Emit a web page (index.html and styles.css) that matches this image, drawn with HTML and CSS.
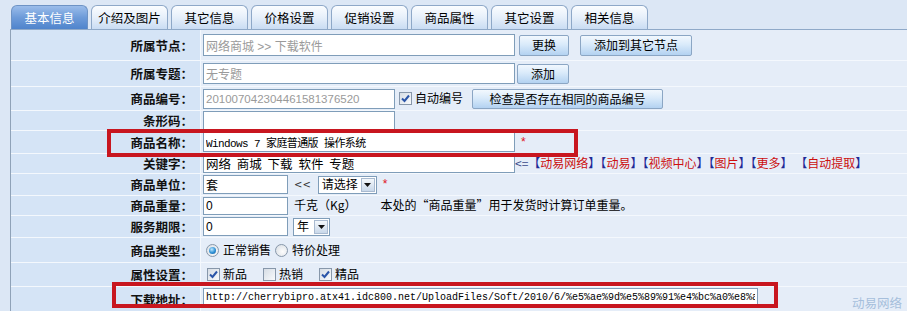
FILE: index.html
```html
<!DOCTYPE html>
<html lang="zh-CN">
<head>
    <meta charset="UTF-8">
    <meta name="viewport" content="width=device-width, initial-scale=1.0">
    <title>添加商品</title>
    <link rel="stylesheet" href="styles.css">
</head>
<body>
<div class="page">
    <ul class="tabs">
        <li class="tab on">基本信息</li>
        <li class="tab">介绍及图片</li>
        <li class="tab">其它信息</li>
        <li class="tab">价格设置</li>
        <li class="tab">促销设置</li>
        <li class="tab">商品属性</li>
        <li class="tab">其它设置</li>
        <li class="tab">相关信息</li>
    </ul>

    <div class="panel">
        <div class="row h31">
            <div class="label">所属节点：</div>
            <div class="field">
                <input class="text w312 h22 dim" type="text" value="网络商城 >> 下载软件">
                <button class="btn change">更换</button>
                <button class="btn addnode">添加到其它节点</button>
            </div>
        </div>
        <div class="row h26">
            <div class="label">所属专题：</div>
            <div class="field">
                <input class="text w312 h21 dim" type="text" value="无专题">
                <button class="btn add">添加</button>
            </div>
        </div>
        <div class="row h24">
            <div class="label">商品编号：</div>
            <div class="field">
                <input class="text w192 h20 dim num" type="text" value="201007042304461581376520">
                <span class="chk on"><svg width="11" height="11" viewBox="0 0 11 11"><path d="M2 5.5 L4.5 8 L9 2.5" /></svg></span>
                <span class="opt">自动编号</span>
                <button class="btn check">检查是否存在相同的商品编号</button>
            </div>
        </div>
        <div class="row h20">
            <div class="label">条形码：</div>
            <div class="field">
                <input class="text w192 h19" type="text" value="">
            </div>
        </div>
        <div class="row h23">
            <div class="label">商品名称：</div>
            <div class="field">
                <input class="text w312 h20 mono" type="text" value="Windows 7 家庭普通版 操作系统">
                <span class="req">*</span>
            </div>
        </div>
        <div class="row h20">
            <div class="label">关键字：</div>
            <div class="field">
                <input class="text w312 h19 words" type="text" value="网络 商城 下载 软件 专题">
                <span class="links">&lt;=<b>【</b><a>动易网络</a><b>】【</b><a>动易</a><b>】【</b><a>视频中心</a><b>】【</b><a>图片</a><b>】【</b><a>更多</a><b>】</b> <b>【</b><a>自动提取</a><b>】</b></span>
            </div>
        </div>
        <div class="row h22">
            <div class="label">商品单位：</div>
            <div class="field">
                <input class="text w85 h19" type="text" value="套">
                <span class="back">&lt;&lt;</span>
                <span class="select w59"><span class="sel-text">请选择</span><span class="sel-arrow"><svg width="7" height="4" viewBox="0 0 7 4"><path d="M0 0h7L3.5 4z"/></svg></span></span>
                <span class="req">*</span>
            </div>
        </div>
        <div class="row h20">
            <div class="label">商品重量：</div>
            <div class="field">
                <input class="text w85 h18" type="text" value="0">
                <span class="unit">千克（Kg）</span>
                <span class="note">本处的“商品重量”用于发货时计算订单重量。</span>
            </div>
        </div>
        <div class="row h22">
            <div class="label">服务期限：</div>
            <div class="field">
                <input class="text w85 h19" type="text" value="0">
                <span class="select w37 year"><span class="sel-text">年</span><span class="sel-arrow"><svg width="7" height="4" viewBox="0 0 7 4"><path d="M0 0h7L3.5 4z"/></svg></span></span>
            </div>
        </div>
        <div class="row h25">
            <div class="label">商品类型：</div>
            <div class="field">
                <span class="radio on"></span><span class="opt">正常销售</span>
                <span class="radio"></span><span class="opt">特价处理</span>
            </div>
        </div>
        <div class="row h24">
            <div class="label">属性设置：</div>
            <div class="field">
                <span class="chk on"><svg width="11" height="11" viewBox="0 0 11 11"><path d="M2 5.5 L4.5 8 L9 2.5" /></svg></span><span class="opt">新品</span>
                <span class="chk"></span><span class="opt">热销</span>
                <span class="chk on"><svg width="11" height="11" viewBox="0 0 11 11"><path d="M2 5.5 L4.5 8 L9 2.5" /></svg></span><span class="opt">精品</span>
            </div>
        </div>
        <div class="row h25 top">
            <div class="label">下载地址：</div>
            <div class="field">
                <input class="text w555 h18 url" type="text" value="http://cherrybipro.atx41.idc800.net/UploadFiles/Soft/2010/6/%e5%ae%9d%e5%89%91%e4%bc%a0%e8%a">
            </div>
        </div>
    </div>

    <div class="mark mark-name"></div>
    <div class="mark mark-url"></div>
    <div class="brand">动易网络</div>
</div>
</body>
</html>
```

FILE: styles.css
```css
* {
    margin: 0;
    padding: 0;
    box-sizing: border-box;
}
body {
    background: #dce7f5;
    font-family: "Liberation Sans", "Noto Sans CJK SC", sans-serif;
    font-size: 12px;
    line-height: 1.2;
    color: #000;
}
.page {
    position: relative;
    height: 311px;
    overflow: hidden;
}

/* tabs */
.tabs {
    display: flex;
    gap: 3px;
    list-style: none;
    height: 30px;
    margin-left: 10px;
    padding: 5px 0 0 1px;
    border-bottom: 1px solid #8fa9c8;
}
.tab {
    width: 77px;
    height: 24px;
    line-height: 23px;
    text-align: center;
    font-size: 12.5px;
    font-family: "Noto Sans CJK SC", sans-serif;
    border: 1px solid #8ea8c8;
    border-bottom: none;
    border-radius: 6px 6px 0 0;
    background: linear-gradient(#fbfdff, #e6effa 50%, #c9dcf3);
}
.tab.on {
    color: #fff;
    border-color: #6d93c5;
    background: linear-gradient(#9bbdea, #6d9bd9 50%, #4f84cc);
}

/* form panel */
.panel {
    margin-left: 10px;
    border-left: 1px solid #8fa2b8;
}
.row {
    display: flex;
    border-bottom: 1px solid #f4f8fd;
}
.h31 { height: 31px; }
.h26 { height: 26px; }
.h25 { height: 25px; }
.h24 { height: 24px; }
.h23 { height: 23px; }
.h22 { height: 22px; }
.h20 { height: 20px; }
.label {
    width: 190px;
    flex: none;
    display: flex;
    align-items: center;
    justify-content: flex-end;
    padding-right: 7px;
    font-family: "Noto Sans CJK SC", sans-serif;
    font-weight: bold;
    font-size: 12.5px;
    color: #111;
    background: #d5e4f6;
    border-right: 1px solid #f4f8fd;
}
.field {
    flex: 1;
    display: flex;
    align-items: center;
    padding-left: 2px;
    background: #e5edf8;
    white-space: nowrap;
}
.row.top .field {
    align-items: flex-start;
    padding-top: 1px;
}

/* inputs */
.text {
    font: inherit;
    border: 1px solid #7f9db9;
    background: #fff;
    padding: 0 2px;
    outline: none;
    color: #000;
}
.w312 { width: 312px; }
.w192 { width: 192px; }
.w85 { width: 85px; }
.w555 { width: 555px; }
.h22 { height: 22px; }
.h21 { height: 21px; }
.h20.text { height: 20px; }
.h19 { height: 19px; }
.h18 { height: 18px; }
.text.dim { color: #9a9a9a; }
.text.num { font-size: 11.5px; }
.text.mono {
    font-family: "Liberation Mono", "Noto Sans CJK SC", monospace;
    font-size: 11px;
    letter-spacing: -0.6px;
}
.text.words {
    font-family: "Noto Sans CJK SC", sans-serif;
    font-size: 12.5px;
    word-spacing: 3px;
    line-height: 17px;
}
.text.url {
    font-family: "Liberation Mono", monospace;
    font-size: 10px;
}

.btn {
    font: inherit;
    font-family: "Noto Sans CJK SC", sans-serif;
    height: 21px;
    line-height: 18px;
    border: 1px solid #8ba6c4;
    border-radius: 2px;
    background: linear-gradient(#f2f8fe, #d9eafa 45%, #b3d2f1);
    color: #000;
}
.btn.change { width: 50px; margin-left: 4px; }
.btn.addnode { width: 112px; margin-left: 11px; }
.btn.add { width: 52px; height: 20px; margin-left: 2px; }
.btn.check { width: 191px; height: 20px; margin-left: 9px; }

/* checkbox, radio */
.chk {
    width: 13px;
    height: 13px;
    flex: none;
    display: flex;
    align-items: center;
    justify-content: center;
    border: 1px solid #8797aa;
    background: linear-gradient(135deg, #d6dde5, #f8fafc);
    margin: 0 3px 0 4px;
}
.chk svg path {
    fill: none;
    stroke: #2b55a8;
    stroke-width: 2;
}
.radio {
    width: 13px;
    height: 13px;
    flex: none;
    border-radius: 50%;
    border: 1px solid #8797aa;
    background: radial-gradient(circle at 60% 60%, #fdfdfd, #d5dbe2);
    margin: 0 4px 0 3px;
    display: flex;
    align-items: center;
    justify-content: center;
}
.radio.on::after {
    content: "";
    width: 7px;
    height: 7px;
    border-radius: 50%;
    background: radial-gradient(circle at 40% 35%, #bfe8ff, #2c8fd4 55%, #1a5c9c);
}
.field .radio + .opt + .radio { margin-left: 4px; }
.field .opt + .chk { margin-left: 16px; }
.opt {
    font-family: "Noto Sans CJK SC", sans-serif;
}

.req {
    color: #e0141e;
    margin-left: 6px;
    font-size: 12px;
}
.links {
    margin-left: 0;
    font-family: "Noto Sans CJK SC", sans-serif;
    color: #3a4a8a;
    font-size: 12px;
}
.links b {
    font-weight: normal;
    color: #1f2a96;
}
.links a {
    color: #cc0f0f;
}

.back {
    margin-left: 6px;
    color: #333;
    font-family: "DejaVu Sans", sans-serif;
    font-size: 10px;
}
.select {
    display: flex;
    align-items: center;
    justify-content: space-between;
    height: 18px;
    margin-left: 7px;
    border: 1px solid #7f9db9;
    background: #fff;
    padding: 1px;
    font-family: "Noto Sans CJK SC", sans-serif;
}
.select.year { margin-left: 5px; }
.w59 { width: 59px; }
.w37 { width: 37px; }
.sel-text { padding-left: 2px; }
.sel-arrow {
    width: 14px;
    height: 14px;
    display: flex;
    align-items: center;
    justify-content: center;
    border: 1px solid #a9bad0;
    background: linear-gradient(#f4f8fc, #c9d8ea);
}
.sel-arrow svg path { fill: #111; }

.unit {
    margin-left: 6px;
    font-family: "Noto Sans CJK SC", sans-serif;
}
.note {
    margin-left: 24px;
    font-family: "Noto Sans CJK SC", sans-serif;
}

/* annotation boxes */
.mark {
    position: absolute;
    border: 4px solid #c8161f;
}
.mark-name {
    left: 107px;
    top: 129px;
    width: 471px;
    height: 28px;
}
.mark-url {
    left: 112px;
    top: 282px;
    width: 666px;
    height: 26px;
}
.brand {
    position: absolute;
    right: 5px;
    bottom: 1px;
    color: #a6bfdc;
    font-family: "Noto Sans CJK SC", sans-serif;
    font-size: 12.5px;
}
```
